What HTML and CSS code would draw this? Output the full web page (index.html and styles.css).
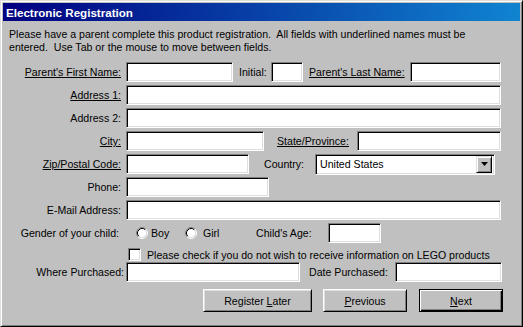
FILE: index.html
```html
<!DOCTYPE html>
<html>
<head>
<meta charset="utf-8">
<title>Electronic Registration</title>
<link rel="stylesheet" href="styles.css">
</head>
<body>
<div class="window">
  <div class="titlebar"><span>Electronic Registration</span></div>
  <div class="client">
    <p class="intro">Please have a parent complete this product registration.&nbsp; All fields with underlined names must be<br>entered.&nbsp; Use Tab or the mouse to move between fields.</p>
    <div class="form">
      <div class="row">
        <span class="lbl lbl-main"><u>Parent's First Name:</u></span>
        <span class="input w-first"></span>
        <span class="lbl lbl-initial">Initial:</span>
        <span class="input w-initial"></span>
        <span class="lbl lbl-last"><u>Parent's Last Name:</u></span>
        <span class="input w-last"></span>
      </div>
      <div class="row">
        <span class="lbl lbl-main"><u>Address 1:</u></span>
        <span class="input w-full"></span>
      </div>
      <div class="row">
        <span class="lbl lbl-main">Address 2:</span>
        <span class="input w-full"></span>
      </div>
      <div class="row">
        <span class="lbl lbl-main"><u>City:</u></span>
        <span class="input w-city"></span>
        <span class="lbl lbl-state"><u>State/Province:</u></span>
        <span class="input w-state"></span>
      </div>
      <div class="row">
        <span class="lbl lbl-main"><u>Zip/Postal Code:</u></span>
        <span class="input w-zip"></span>
        <span class="lbl lbl-country">Country:</span>
        <span class="select">
          <span class="select-text">United States</span>
          <span class="select-btn"><svg width="7" height="4" viewBox="0 0 7 4"><path d="M0 0h7L3.5 4z" fill="#000"/></svg></span>
        </span>
      </div>
      <div class="row">
        <span class="lbl lbl-main">Phone:</span>
        <span class="input w-phone"></span>
      </div>
      <div class="row">
        <span class="lbl lbl-main">E-Mail Address:</span>
        <span class="input w-full"></span>
      </div>
      <div class="row">
        <span class="lbl lbl-main lbl-gender">Gender of your child:</span>
        <span class="radio radio-boy"><svg width="12" height="12" viewBox="0 0 12 12"><circle cx="6" cy="6" r="4.5" fill="#fff"/><path d="M2.11 9.89A5.5 5.5 0 0 1 9.89 2.11" fill="none" stroke="#808080"/><path d="M9.89 2.11A5.5 5.5 0 0 1 2.11 9.89" fill="none" stroke="#fff"/><path d="M2.82 9.18A4.5 4.5 0 0 1 9.18 2.82" fill="none" stroke="#000"/><path d="M9.18 2.82A4.5 4.5 0 0 1 2.82 9.18" fill="none" stroke="#dfdfdf"/></svg><span>Boy</span></span>
        <span class="radio radio-girl"><svg width="12" height="12" viewBox="0 0 12 12"><circle cx="6" cy="6" r="4.5" fill="#fff"/><path d="M2.11 9.89A5.5 5.5 0 0 1 9.89 2.11" fill="none" stroke="#808080"/><path d="M9.89 2.11A5.5 5.5 0 0 1 2.11 9.89" fill="none" stroke="#fff"/><path d="M2.82 9.18A4.5 4.5 0 0 1 9.18 2.82" fill="none" stroke="#000"/><path d="M9.18 2.82A4.5 4.5 0 0 1 2.82 9.18" fill="none" stroke="#dfdfdf"/></svg><span>Girl</span></span>
        <span class="lbl lbl-age">Child's Age:</span>
        <span class="input w-age"></span>
      </div>
      <div class="row row-check">
        <span class="checkbox"></span>
        <span class="check-text">Please check if you do not wish to receive information on LEGO products</span>
      </div>
      <div class="row row-where">
        <span class="lbl lbl-main lbl-where">Where Purchased:</span>
        <span class="input w-where"></span>
        <span class="lbl lbl-date">Date Purchased:</span>
        <span class="input w-date"></span>
      </div>
      <div class="row row-buttons">
        <span class="btn btn-later"><span>Register <u>L</u>ater</span></span>
        <span class="btn btn-prev"><span><u>P</u>revious</span></span>
        <span class="btn btn-next btn-default"><span><u>N</u>ext</span></span>
      </div>
    </div>
  </div>
</div>
</body>
</html>
```

FILE: styles.css
```css
* { box-sizing: border-box; }
html, body { margin: 0; padding: 0; background: #c0c0c0; }
body {
  font-family: "Liberation Sans", Arial, sans-serif;
  font-size: 10.6px;
  color: #000;
}
u { text-decoration: underline; text-underline-offset: 1px; }

.window {
  width: 523px;
  height: 327px;
  border: 1px solid;
  border-color: #dfdfdf #000 #000 #dfdfdf;
  box-shadow: inset 1px 1px #fff, inset -1px -1px #808080;
  padding: 2px;
  background: #c0c0c0;
  overflow: hidden;
}

.titlebar {
  height: 18px;
  background: linear-gradient(to right, #000080, #1084d0);
  color: #fff;
  font-weight: bold;
  font-size: 11.6px;
  padding-left: 3px;
  display: flex;
  align-items: center;
}

.client { padding-top: 7px; }

.intro {
  margin: 0 0 0 6px;
  line-height: 13px;
}

.form {
  display: flex;
  flex-direction: column;
  gap: 3px;
  margin-top: 8px;
}

.row {
  display: flex;
  align-items: center;
  height: 20px;
  flex: none;
}

.lbl { flex: none; white-space: nowrap; }
.lbl-main { width: 123px; text-align: right; padding-right: 5px; }
.lbl-gender { padding-right: 7px; }
.lbl-where { padding-right: 2px; }
.lbl-initial { width: 38px; padding-left: 6px; }
.lbl-last { width: 107px; padding-left: 6px; }
.lbl-state { width: 93px; padding-left: 13px; }
.lbl-country { width: 66px; padding-left: 15px; }
.lbl-date { width: 95px; padding-left: 9px; }

.input {
  flex: none;
  height: 20px;
  background: #fff;
  border: 1px solid;
  border-color: #808080 #fff #fff #808080;
  box-shadow: inset 1px 1px #000, inset -1px -1px #dfdfdf;
}
.w-first { width: 107px; }
.w-initial { width: 32px; }
.w-last { width: 91px; }
.w-full { width: 375px; }
.w-city { width: 138px; }
.w-state { width: 144px; }
.w-zip { width: 123px; }
.w-phone { width: 143px; }
.w-age { width: 53px; }
.w-where { width: 174px; }
.w-date { width: 107px; }

.select {
  flex: none;
  width: 180px;
  height: 21px;
  display: flex;
  align-items: center;
  background: #fff;
  border: 1px solid;
  border-color: #808080 #fff #fff #808080;
  box-shadow: inset 1px 1px #000, inset -1px -1px #dfdfdf;
  padding: 2px;
}
.select-text { flex: 1; padding-left: 2px; }
.select-btn {
  width: 16px;
  height: 17px;
  background: #c0c0c0;
  border: 1px solid;
  border-color: #dfdfdf #000 #000 #dfdfdf;
  box-shadow: inset 1px 1px #fff, inset -1px -1px #808080;
  display: flex;
  align-items: center;
  justify-content: center;
}
.select-btn svg { display: block; }

.radio {
  flex: none;
  display: flex;
  align-items: center;
  gap: 3px;
}
.radio svg { display: block; }
.radio-boy { margin-left: 10px; width: 49px; }
.radio-girl { width: 71px; gap: 6px; }

.lbl-age { width: 72px; }

.row-check { height: 13px; margin-top: 2px; }
.checkbox {
  flex: none;
  width: 13px;
  height: 13px;
  margin-left: 125px;
  background: #fff;
  border: 1px solid;
  border-color: #808080 #fff #fff #808080;
  box-shadow: inset 1px 1px #000, inset -1px -1px #dfdfdf;
}
.check-text { margin-left: 6px; white-space: nowrap; }

.row-where { margin-top: -2px; }

.row-buttons { height: 23px; margin-top: 4px; }
.btn {
  flex: none;
  height: 23px;
  display: flex;
  align-items: center;
  justify-content: center;
  background: #c0c0c0;
  border: 1px solid;
  border-color: #fff #000 #000 #fff;
  box-shadow: inset 1px 1px #dfdfdf, inset -1px -1px #808080;
}
.btn-later { width: 109px; margin-left: 200px; }
.btn-prev { width: 84px; margin-left: 11px; }
.btn-next { width: 84px; margin-left: 12px; }
.btn-default {
  border-color: #000;
  box-shadow: inset 1px 1px #fff, inset -1px -1px #000, inset -2px -2px #808080;
}
```
